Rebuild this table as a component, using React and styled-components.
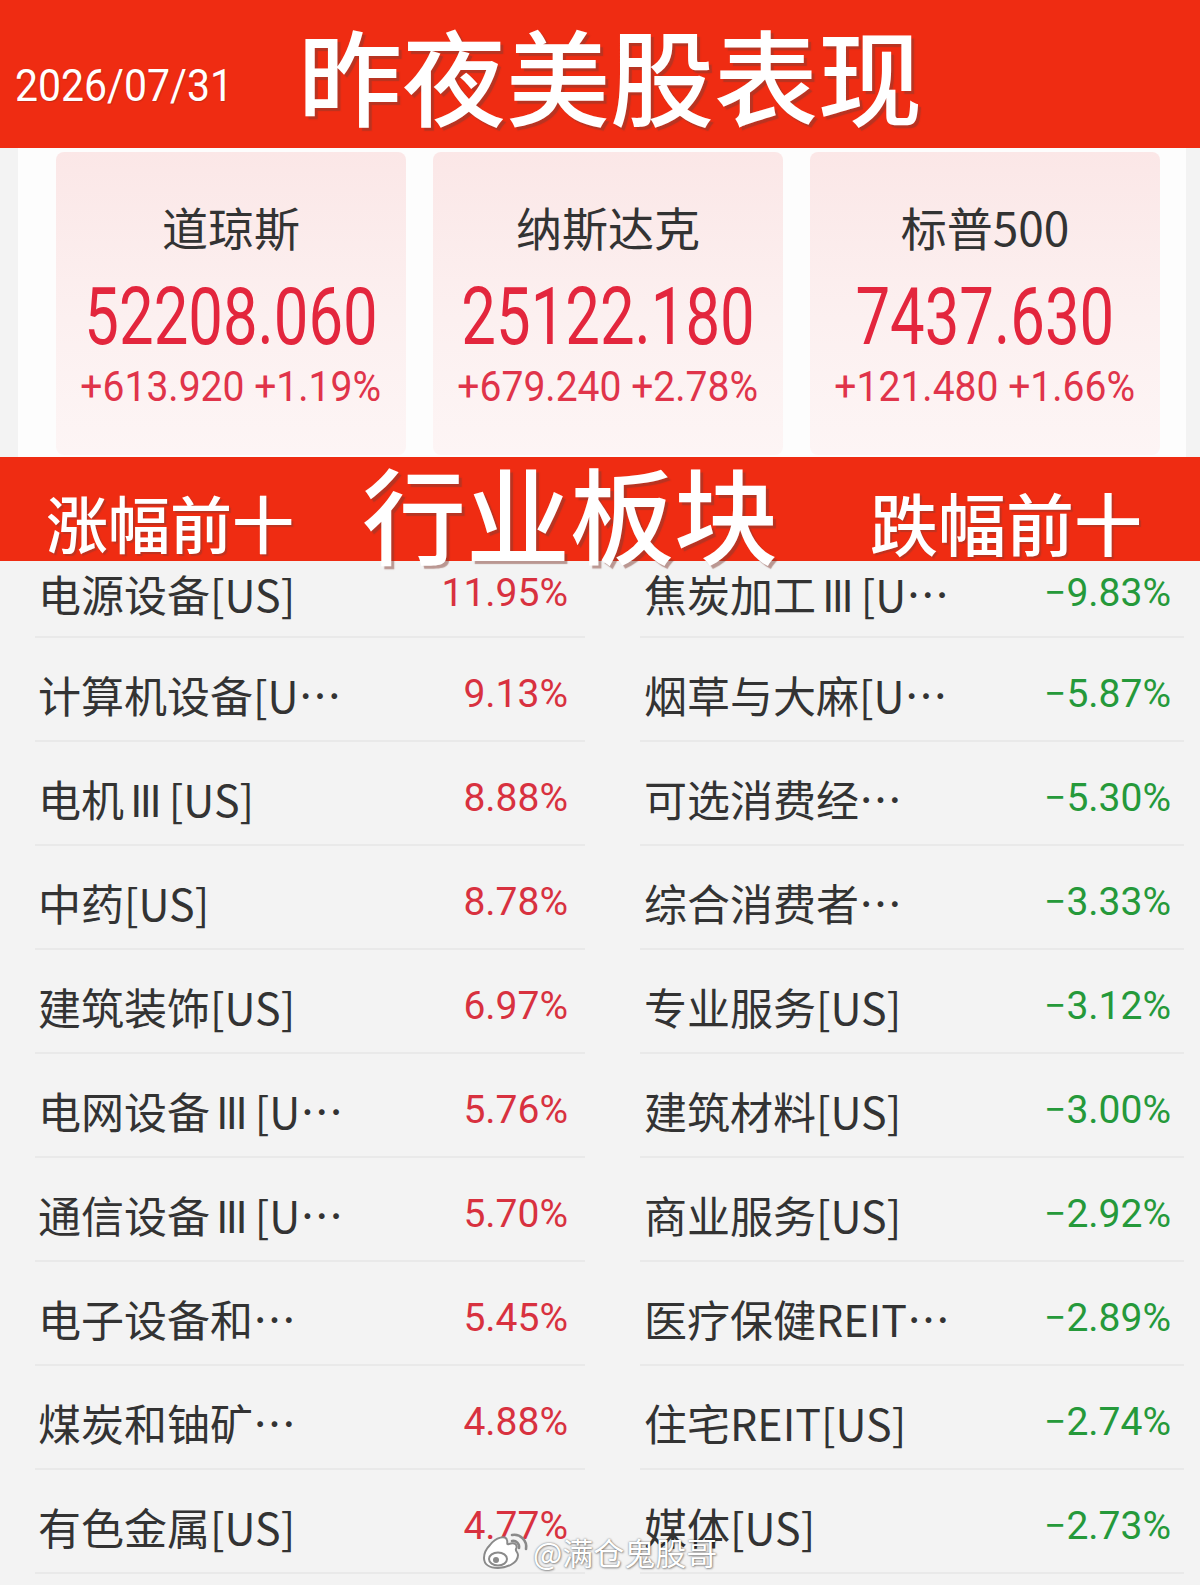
import React from 'react';
import styled, { createGlobalStyle } from 'styled-components';

const GlobalStyle = createGlobalStyle`
  html, body { margin: 0; padding: 0; background: #f3f3f3; }
  body { font-family: "Noto Sans CJK SC", "Noto Sans", sans-serif; overflow: hidden; }
`;

const RED = '#ef2c12';

const Page = styled.div`
  position: relative;
  width: 1200px;
  height: 1585px;
  overflow: hidden;
  background: #f3f3f3;
`;

const TopBanner = styled.header`
  height: 148px;
  background: ${RED};
  display: flex;
  align-items: center;
  padding-left: 15px;
  box-sizing: border-box;
`;

const DateText = styled.div`
  font-family: Roboto, "Liberation Sans", sans-serif;
  font-size: 45px;
  line-height: 1;
  color: #fff;
  width: 216px;
  margin-top: 22px;
  transform: scaleX(0.91);
  transform-origin: left center;
  white-space: nowrap;
  text-shadow: 1px 1px 1px rgba(120, 40, 30, 0.35);
`;

const Title = styled.h1`
  margin: 0 0 0 67px;
  font-size: 104px;
  line-height: 1.2;
  font-weight: 500;
  color: #fff;
  white-space: nowrap;
  text-shadow: 3px 3px 1px rgba(130, 60, 50, 0.5);
`;

const IndexPanel = styled.section`
  height: 309px;
  margin: 0 14px 0 18px;
  background: #fdfdfd;
  box-sizing: border-box;
  padding: 4px 0 0 38px;
  display: grid;
  grid-template-columns: repeat(3, 350px);
  column-gap: 27px;
  align-items: start;
`;

const IndexCard = styled.div`
  height: 303px;
  border-radius: 8px;
  background: linear-gradient(180deg, #fbe7e7 0%, #fcf0f0 55%, #fdf5f5 100%);
  display: flex;
  flex-direction: column;
  align-items: center;
  padding-top: 46px;
  box-sizing: border-box;
`;

const CardName = styled.div`
  font-size: 46px;
  line-height: 56px;
  color: #333;
  white-space: nowrap;
`;

const CardValue = styled.div`
  font-family: Roboto, "Liberation Sans", sans-serif;
  font-size: 79px;
  line-height: 84px;
  margin-top: 21px;
  font-weight: 400;
  color: #e3263d;
  white-space: nowrap;
`;

const CardChange = styled.div`
  font-family: Roboto, "Liberation Sans", sans-serif;
  font-size: 42px;
  line-height: 44px;
  margin-top: 6px;
  color: #e0344a;
  white-space: nowrap;
`;

const Narrow = styled.span`
  display: inline-block;
  transform: scaleX(${(p) => p.$sx});
  transform-origin: center;
`;

const SectorBanner = styled.section`
  height: 104px;
  background: ${RED};
  display: flex;
  align-items: flex-start;
  padding-left: 46px;
  box-sizing: border-box;
`;

const SideLabel = styled.div`
  font-size: ${(p) => p.$size}px;
  line-height: 1;
  font-weight: 500;
  color: #fff;
  margin-top: ${(p) => p.$top}px;
  margin-left: ${(p) => p.$left || 0}px;
  white-space: nowrap;
  text-shadow: 2px 2px 1px rgba(130, 60, 50, 0.45);
`;

const BigTitle = styled.div`
  font-size: 104px;
  line-height: 1;
  font-weight: 500;
  color: #fff;
  margin: 3px 0 0 68px;
  white-space: nowrap;
  text-shadow: 3px 3px 1px rgba(130, 60, 50, 0.5);
`;

const SectorGrid = styled.section`
  display: grid;
  grid-template-columns: 550px 544px;
  column-gap: 55px;
  padding-left: 35px;
`;

const SectorColumn = styled.div`
  display: flex;
  flex-direction: column;
`;

const SectorRow = styled.div`
  display: flex;
  justify-content: space-between;
  align-items: center;
  height: ${(p) => (p.$first ? 77 : 104)}px;
  box-sizing: border-box;
  padding-top: ${(p) => (p.$first ? 0 : 10)}px;
  padding-bottom: ${(p) => (p.$first ? 11 : 0)}px;
  padding-left: ${(p) => p.$pl}px;
  padding-right: ${(p) => p.$pr}px;
  border-bottom: 2px solid #e9e9e9;
`;

const SectorName = styled.span`
  font-size: 43px;
  line-height: 1;
  color: #333;
  white-space: nowrap;
`;

const Roman = styled.span`
  letter-spacing: -3px;
  margin: 0 10px 0 6px;
`;

const SectorPct = styled.span`
  font-family: Roboto, "Liberation Sans", sans-serif;
  font-size: 39px;
  line-height: 1;
  color: ${(p) => (p.$up ? '#d8313f' : '#25993a')};
  white-space: nowrap;
`;

const Watermark = styled.div`
  position: absolute;
  left: 482px;
  top: 1531px;
  display: flex;
  align-items: center;
  gap: 3px;
`;

const WatermarkText = styled.span`
  font-size: 31px;
  line-height: 1;
  color: #fff;
  white-space: nowrap;
  text-shadow: 0 0 2px rgba(0, 0, 0, 0.55), 1px 1px 2px rgba(0, 0, 0, 0.3);
`;

const WeiboLogo = () => (
  <svg width="48" height="40" viewBox="0 0 48 40">
    <g fill="#fff" stroke="#8a8a8a" strokeWidth="2">
      <path d="M8 14 C14 6 24 4 25 9 C26 12 24 14 27 13 C33 11 36 14 34 18 C33 20 36 21 36 24 C36 32 25 37 16 37 C7 37 2 33 2 27 C2 22 4 18 8 14 Z" />
      <ellipse cx="16" cy="28" rx="9" ry="6.5" />
    </g>
    <circle cx="14" cy="29" r="3" fill="#8a8a8a" />
    <g fill="none" stroke="#8a8a8a" strokeWidth="2.6" strokeLinecap="round">
      <path d="M30 4 A12 12 0 0 1 44 18" />
      <path d="M30 10 A6 6 0 0 1 37 17" />
    </g>
  </svg>
);

const indices = [
  { name: '道琼斯', value: '52208.060', change: '+613.920 +1.19%' },
  { name: '纳斯达克', value: '25122.180', change: '+679.240 +2.78%' },
  { name: '标普500', value: '7437.630', change: '+121.480 +1.66%' },
];

// name parts: [before, roman, after]
const gainers = [
  [['电源设备[US]'], '11.95%'],
  [['计算机设备[U⋯'], '9.13%'],
  [['电机', 'III', '[US]'], '8.88%'],
  [['中药[US]'], '8.78%'],
  [['建筑装饰[US]'], '6.97%'],
  [['电网设备', 'III', '[U⋯'], '5.76%'],
  [['通信设备', 'III', '[U⋯'], '5.70%'],
  [['电子设备和⋯'], '5.45%'],
  [['煤炭和铀矿⋯'], '4.88%'],
  [['有色金属[US]'], '4.77%'],
];

const losers = [
  [['焦炭加工', 'III', '[U⋯'], '−9.83%'],
  [['烟草与大麻[U⋯'], '−5.87%'],
  [['可选消费经⋯'], '−5.30%'],
  [['综合消费者⋯'], '−3.33%'],
  [['专业服务[US]'], '−3.12%'],
  [['建筑材料[US]'], '−3.00%'],
  [['商业服务[US]'], '−2.92%'],
  [['医疗保健REIT⋯'], '−2.89%'],
  [['住宅REIT[US]'], '−2.74%'],
  [['媒体[US]'], '−2.73%'],
];

const Name = ({ parts }) => (
  <SectorName>
    {parts[0]}
    {parts.length > 1 && <Roman>{parts[1]}</Roman>}
    {parts.length > 1 && parts[2]}
  </SectorName>
);

export default function App() {
  return (
    <Page lang="zh-CN">
      <GlobalStyle />
      <TopBanner>
        <DateText>2026/07/31</DateText>
        <Title>昨夜美股表现</Title>
      </TopBanner>

      <IndexPanel>
        {indices.map((it) => (
          <IndexCard key={it.name}>
            <CardName>{it.name}</CardName>
            <CardValue>
              <Narrow $sx={0.78}>{it.value}</Narrow>
            </CardValue>
            <CardChange>
              <Narrow $sx={0.93}>{it.change}</Narrow>
            </CardChange>
          </IndexCard>
        ))}
      </IndexPanel>

      <SectorBanner>
        <SideLabel $size={62} $top={34}>涨幅前十</SideLabel>
        <BigTitle>行业板块</BigTitle>
        <SideLabel $size={68} $top={31} $left={92}>跌幅前十</SideLabel>
      </SectorBanner>

      <SectorGrid>
        <SectorColumn>
          {gainers.map(([n, v], i) => (
            <SectorRow key={v} $first={i === 0} $pl={3} $pr={17}>
              <Name parts={n} />
              <SectorPct $up>{v}</SectorPct>
            </SectorRow>
          ))}
        </SectorColumn>
        <SectorColumn>
          {losers.map(([n, v], i) => (
            <SectorRow key={v} $first={i === 0} $pl={4} $pr={13}>
              <Name parts={n} />
              <SectorPct>{v}</SectorPct>
            </SectorRow>
          ))}
        </SectorColumn>
      </SectorGrid>

      <Watermark>
        <WeiboLogo />
        <WatermarkText>@满仓鬼股哥</WatermarkText>
      </Watermark>
    </Page>
  );
}
